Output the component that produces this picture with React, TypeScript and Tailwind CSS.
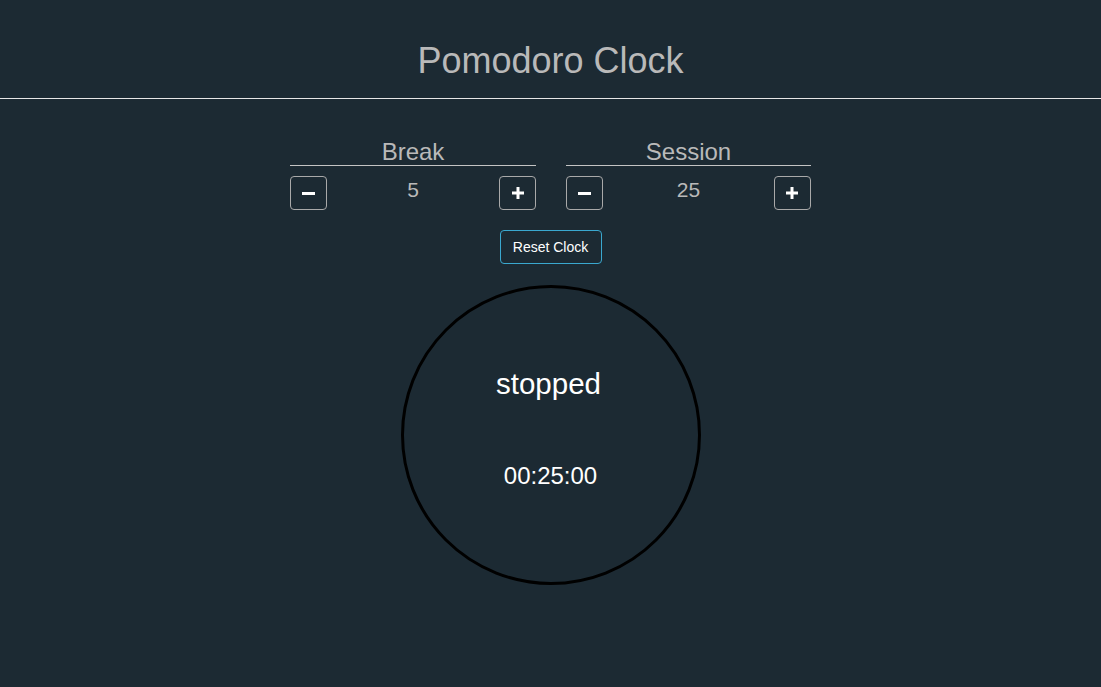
import React from "react";

function Minus() {
  return (
    <svg width="13" height="3" viewBox="0 0 13 3" className="block">
      <rect x="0" y="0" width="13" height="3" fill="#ffffff" />
    </svg>
  );
}

function Plus() {
  return (
    <svg width="12" height="12" viewBox="0 0 12 12" className="block">
      <rect x="0" y="4.5" width="12" height="3" fill="#ffffff" />
      <rect x="4.5" y="0" width="3" height="12" fill="#ffffff" />
    </svg>
  );
}

function Control({ label, value, width }: { label: string; value: string; width: string }) {
  return (
    <div className={`flex flex-col ${width}`}>
      <div className="h-[28px] border-b border-[#c4c4c4] text-center text-[24px] leading-[27px] text-[#b9b9b9]">
        {label}
      </div>
      <div className="mt-[10px] flex h-[34px] items-start justify-between">
        <button className="flex h-[34px] w-[37px] items-center justify-center rounded-[4px] border border-[#a9a9a9] bg-transparent">
          <Minus />
        </button>
        <div className="pt-[2px] text-[21px] leading-[24px] text-[#b9b9b9]">{value}</div>
        <button className="flex h-[34px] w-[37px] items-center justify-center rounded-[4px] border border-[#a9a9a9] bg-transparent">
          <Plus />
        </button>
      </div>
    </div>
  );
}

export default function App() {
  return (
    <div
      className="min-h-[687px] w-full bg-[#1c2a33]"
      style={{ fontFamily: '"Liberation Sans", Arial, sans-serif' }}
    >
      <header className="border-b border-[#e6e6e6] pt-[40px] pb-[17px] text-center">
        <h1 className="text-[36px] leading-[41px] font-normal text-[#b9b9b9]">Pomodoro Clock</h1>
      </header>
      <div className="mt-[39px] flex justify-center gap-[30px]">
        <Control label="Break" value="5" width="w-[246px]" />
        <Control label="Session" value="25" width="w-[245px]" />
      </div>
      <div className="mt-[20px] flex justify-center">
        <button className="h-[34px] w-[102px] rounded-[4px] border border-[#3aa8cf] bg-transparent text-[14px] text-white">
          Reset Clock
        </button>
      </div>
      <div className="mt-[21px] flex justify-center">
        <div className="flex h-[300px] w-[300px] flex-col items-center rounded-full border-[3px] border-black pt-[79px]">
          <div className="pr-[4px] text-[29.5px] leading-[33px] text-white">stopped</div>
          <div className="mt-[62px] text-[24px] leading-[28px] text-white">00:25:00</div>
        </div>
      </div>
    </div>
  );
}
